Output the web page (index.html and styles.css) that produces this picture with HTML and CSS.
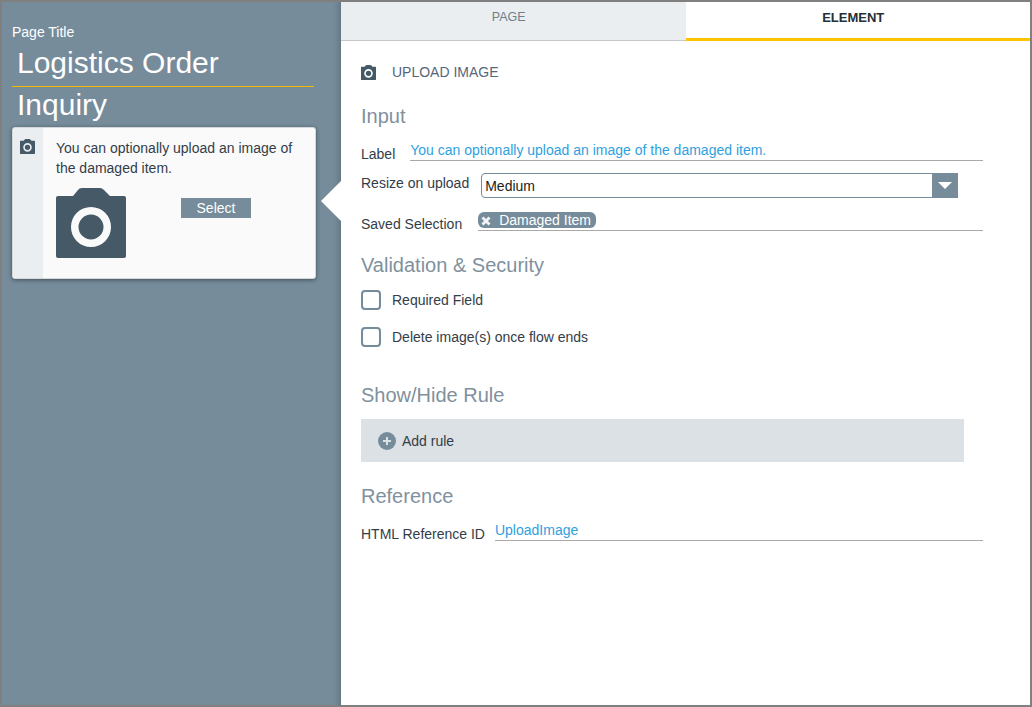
FILE: index.html
```html
<!DOCTYPE html>
<html lang="en">
<head>
<meta charset="utf-8">
<title>Upload Image</title>
<link rel="stylesheet" href="styles.css">
</head>
<body>
<svg class="defs" width="0" height="0" aria-hidden="true">
  <symbol id="camera" viewBox="0 0 70 70">
    <path fill-rule="evenodd" d="M2 8H17L22 2Q23 0 26 0H44Q46 0 48 2L54 8H68Q70 8 70 10V68Q70 70 68 70H2Q0 70 0 68V10Q0 8 2 8ZM35 19A20 20 0 1 0 35 59A20 20 0 1 0 35 19ZM35 26.500A12.500 12.500 0 1 1 35 51.500A12.500 12.500 0 1 1 35 26.500Z"/>
  </symbol>
</svg>
<div class="app">
  <aside class="canvas">
    <div class="page-label">Page Title</div>
    <div class="page-title">
      <div class="title-line first">Logistics Order</div>
      <div class="title-line second">Inquiry</div>
    </div>
    <div class="card">
      <div class="card-side"><svg class="icon-sm"><use href="#camera"/></svg></div>
      <div class="card-body">
        <p class="card-text">You can optionally upload an image of the damaged item.</p>
        <div class="card-row">
          <svg class="icon-lg"><use href="#camera"/></svg>
          <span class="select-btn">Select</span>
        </div>
      </div>
    </div>
    <div class="pointer"></div>
  </aside>
  <main class="panel">
    <div class="tabs">
      <div class="tab">PAGE</div>
      <div class="tab active">ELEMENT</div>
    </div>
    <div class="content">
      <div class="element-head">
        <svg class="icon-head"><use href="#camera"/></svg>
        <span>UPLOAD IMAGE</span>
      </div>
      <h2 class="heading h-input">Input</h2>
      <div class="row row-label">
        <span class="lbl">Label</span>
        <span class="value value-label">You can optionally upload an image of the damaged item.</span>
      </div>
      <div class="row row-resize">
        <span class="lbl">Resize on upload</span>
        <div class="dropdown"><span class="dd-text">Medium</span><span class="dd-btn"><span class="dd-caret"></span></span></div>
      </div>
      <div class="row row-saved">
        <span class="lbl">Saved Selection</span>
        <span class="value value-saved"><span class="tag"><svg class="tag-x" viewBox="0 0 10 10"><path d="M1.500 1.500L8.500 8.500M8.500 1.500L1.500 8.500"/></svg>Damaged Item</span></span>
      </div>
      <h2 class="heading h-valid">Validation &amp; Security</h2>
      <label class="check first-check"><span class="box"></span>Required Field</label>
      <label class="check second-check"><span class="box"></span>Delete image(s) once flow ends</label>
      <h2 class="heading h-rule">Show/Hide Rule</h2>
      <div class="rule-bar">
        <svg class="plus" viewBox="0 0 18 18"><circle cx="9" cy="9" r="9"/><path d="M9 5V13M5 9H13"/></svg>
        <span>Add rule</span>
      </div>
      <h2 class="heading h-ref">Reference</h2>
      <div class="row row-ref">
        <span class="lbl">HTML Reference ID</span>
        <span class="value value-ref">UploadImage</span>
      </div>
    </div>
  </main>
</div>
</body>
</html>
```
FILE: styles.css
```css
* { box-sizing: border-box; }
html, body { margin: 0; padding: 0; }
body { font-family: "Liberation Sans", Arial, sans-serif; background: #fff; overflow: hidden; }
.defs { position: absolute; }
.app { width: 1032px; height: 707px; border: 2px solid #808080; display: flex; background: #fff; }

.canvas { position: relative; width: 339px; flex: none; background: #768c9b; padding: 22px 0 0 10px; box-shadow: inset -8px 0 8px -8px rgba(0,0,0,.3); }
.page-label { font-size: 14px; line-height: 16px; color: #fff; }
.page-title { width: 302px; margin-top: 1px; font-size: 30px; line-height: 42px; color: #fff; }
.title-line { padding-left: 5px; }
.title-line.first { height: 46px; padding-top: 1px; border-bottom: 1px solid #f5b800; }
.title-line.second { height: 40px; line-height: 36px; }
.card { display: flex; width: 304px; height: 152px; background: #fafafb; border: 1px solid #d4d8db; border-radius: 3px; box-shadow: 0 1px 4px rgba(0,0,0,.45); overflow: hidden; }
.card-side { width: 30px; flex: none; background: #ebeef1; padding: 11px 0 0 7px; }
.icon-sm { display: block; width: 15px; height: 15px; fill: #455a66; }
.card-body { flex: 1; padding: 10px 12px 0 13px; }
.card-text { margin: 0; font-size: 14px; line-height: 20px; color: #333d47; }
.card-row { display: flex; align-items: flex-start; margin-top: 10px; }
.icon-lg { display: block; width: 70px; height: 70px; fill: #455a66; flex: none; }
.select-btn { margin: 10px 0 0 55px; width: 70px; height: 20px; background: #768c9b; color: #fff; font-size: 14px; line-height: 20px; text-align: center; }
.pointer { position: absolute; right: 0; top: 179px; width: 0; height: 0; border-top: 20px solid transparent; border-bottom: 20px solid transparent; border-right: 20px solid #fff; }

.panel { flex: 1; min-width: 0; display: flex; flex-direction: column; }
.tabs { display: flex; height: 39px; flex: none; border-bottom: 1px solid #c4c8cb; }
.tab { width: 50%; height: 39px; padding-right: 9px; background: #ebeef1; color: #6f7f8a; font-size: 12.500px; line-height: 31px; text-align: center; }
.tab:first-child { height: 38px; }
.tab.active { background: #fff; color: #22303a; font-size: 13px; font-weight: bold; border-bottom: 3px solid #ffc400; }

.content { padding: 0 0 0 20px; font-size: 14px; color: #333d47; }
.element-head { display: flex; align-items: center; gap: 16px; margin-top: 23px; height: 16px; font-size: 14px; color: #55677a; }
.icon-head { width: 15px; height: 15px; fill: #455a66; }
.heading { margin: 0; font-weight: normal; font-size: 20px; line-height: 24px; color: #7f919e; }
.h-input { margin-top: 24px; }
.row { display: flex; align-items: flex-start; }
.lbl { font-size: 14px; line-height: 16px; color: #333d47; white-space: nowrap; }
.value { display: block; height: 20px; border-bottom: 1px solid #a9a9a9; color: #2f9fe0; font-size: 14px; line-height: 17px; }
.row-label { margin-top: 14px; }
.row-label .lbl { margin-top: 4px; }
.value-label { margin-left: 15px; width: 573px; height: 19px; }
.row-resize { margin-top: 11px; height: 26px; }
.row-resize .lbl { margin-top: 2px; }
.dropdown { display: flex; margin-left: 12px; width: 477px; height: 25px; border: 1px solid #768c9b; border-radius: 4px 0 0 4px; }
.dd-text { flex: 1; padding-left: 3px; font-size: 14px; line-height: 24px; color: #222; }
.dd-btn { display: flex; align-items: center; justify-content: center; width: 26px; margin: -1px -1px -1px 0; background: #768c9b; }
.dd-caret { width: 0; height: 0; border-left: 7px solid transparent; border-right: 7px solid transparent; border-top: 7px solid #fff; }
.row-saved { margin-top: 12px; }
.row-saved .lbl { margin-top: 5px; }
.value-saved { margin-left: 16px; width: 505px; height: 20px; line-height: 0; }
.tag { display: inline-flex; align-items: center; height: 16px; margin-top: 1px; padding: 0 5px 0 3px; border-radius: 6px; background: #768c9b; color: #fff; font-size: 14px; line-height: 16px; }
.tag-x { width: 10px; height: 10px; margin-right: 8px; margin-top: 1px; }
.tag-x path { stroke: #f2f4f5; stroke-width: 2.800; fill: none; }
.h-valid { margin-top: 21px; }
.check { display: flex; align-items: center; gap: 11px; height: 19px; font-size: 14px; color: #333d47; }
.box { width: 20px; height: 20px; flex: none; border: 2px solid #768c9b; border-radius: 4px; background: #fff; box-shadow: inset 0 0 1px rgba(118,140,155,.3); }
.first-check { margin-top: 13px; }
.second-check { margin-top: 18px; }
.h-rule { margin-top: 37px; }
.rule-bar { display: flex; align-items: center; gap: 6px; width: 603px; height: 43px; margin-top: 12px; padding-left: 17px; background: #dbe1e4; font-size: 14px; color: #333d47; }
.plus { width: 18px; height: 18px; }
.plus circle { fill: #768c9b; }
.plus path { stroke: #dbe1e4; stroke-width: 2; }
.h-ref { margin-top: 22px; }
.row-ref { margin-top: 14px; }
.row-ref .lbl { margin-top: 4px; }
.value-ref { margin-left: 10px; width: 488px; height: 19px; }
```
